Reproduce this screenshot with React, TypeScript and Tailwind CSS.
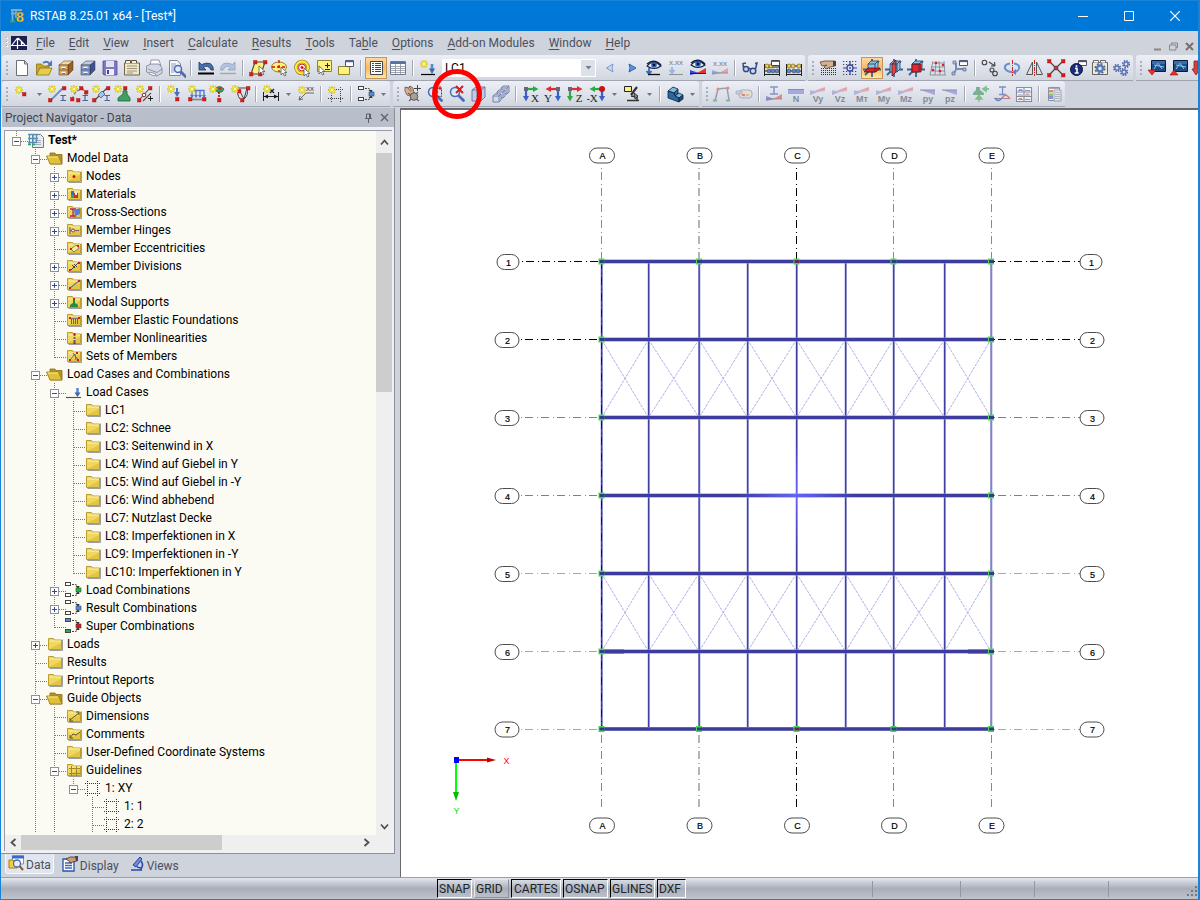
import { useState, type ReactNode } from "react";

/* ---------- small drawing parts shared by the icons ---------- */

const Star = ({ x = 5, y = 5 }: { x?: number; y?: number }) => (
  <g transform={`translate(${x} ${y})`}>
    <path d="M0-4V4M-4 0H4M-3-3L3 3M3-3L-3 3" stroke="#c4b820" strokeWidth="1.4" />
    <path d="M0-3.500V3.500M-3.500 0H3.500M-2.500-2.500L2.500 2.500M2.500-2.500L-2.500 2.500" stroke="#ffee30" strokeWidth="1" />
    <circle r="1.3" fill="#fffbb0" />
  </g>
);

const Dot = ({ x, y, c = "#e01818" }: { x: number; y: number; c?: string }) => (
  <rect x={x - 1.5} y={y - 1.5} width="3.500" height="3.500" fill={c} stroke="#a01818" strokeWidth=".4" />
);

const Beam = ({ x, y }: { x: number; y: number }) => (
  <path d={`M${x - 2.5} ${y - 2.5}h5.500M${x} ${y - 2.5}v5M${x - 2.5} ${y + 2.5}h5.500`} stroke="#4c64a8" strokeWidth="1.2" fill="none" />
);

const Cursor = ({ x, y }: { x: number; y: number }) => (
  <path transform={`translate(${x} ${y})`} d="M0 0v8l2-2 1.5 3 1.5-.8-1.5-2.7H6z" fill="#fff" stroke="#555" strokeWidth=".8" />
);

const Eye = ({ x = 10, y = 6 }: { x?: number; y?: number }) => (
  <g transform={`translate(${x} ${y})`}>
    <path d="M-7 1Q-1-6 7 1Q0 6-7 1z" fill="#e8eef8" stroke="#15203c" strokeWidth="1.1" />
    <path d="M-7-1Q0-7 7 0" fill="none" stroke="#15203c" strokeWidth="1.4" />
    <circle r="2.8" fill="#2c64c4" />
    <circle r="1.3" fill="#061030" />
  </g>
);

const Lens = ({ x, y, r = 4.5 }: { x: number; y: number; r?: number }) => (
  <g>
    <path d={`M${x + r - 1} ${y + r - 1}l5 5`} stroke="#5068b4" strokeWidth="2.800" strokeLinecap="round" />
    <circle cx={x} cy={y} r={r} fill="#dceafc" stroke="#4c6cb8" strokeWidth="1.500" />
  </g>
);

const Cabinet = ({ front, top, side }: { front: string; top: string; side: string }) => (
  <g stroke="#403020" strokeWidth=".5">
    <path d="M3 7l5-4h9l-4 4z" fill={top} />
    <path d="M12 7l5-4v9l-5 5z" fill={side} />
    <path d="M3 7h9v10H3z" fill={front} />
    <path d="M3 12h9" />
    <path d="M5.500 9.500h4M5.500 14.500h4" stroke="#fff" strokeWidth="1.300" />
    <path d="M6 10.500h3M6 15.500h3" stroke="#333" />
  </g>
);

const Cube = ({ planes }: { planes: ReactNode }) => (
  <g>
    <path d="M1 11.500h18M10 1v18M3 17L17 3" stroke="#3c6490" strokeWidth="1.800" />
    <path d="M6 6l3-3h7v8l-3 3H6z" fill="#8cc4e8" stroke="#1c4468" strokeWidth=".8" />
    {planes}
    <path d="M6 6h7v8M13 6l3-3" fill="none" stroke="#1c3450" strokeWidth=".8" />
  </g>
);

const Wedge = ({ label }: { label: string }) => (
  <g>
    <path d="M2 8.500L17 3v4L9 8z" fill="#e8a0a4" />
    <path d="M2 6.500l9 1L2 11z" fill="#a8acdc" />
    <path d="M2 8.500L17 6" stroke="#c0c4d0" strokeWidth=".8" />
    <text x="10" y="18" textAnchor="middle" fontSize="9" fontWeight="bold" fill="#868b94" fontFamily="Liberation Sans, sans-serif">
      {label}
    </text>
  </g>
);

const Slope = ({ label }: { label: string }) => (
  <g>
    <path d="M2 6h15v5z" fill="#a4a8dc" />
    <path d="M2 6h15" stroke="#8a90a0" />
    <text x="10" y="18" textAnchor="middle" fontSize="9" fontWeight="bold" fill="#868b94" fontFamily="Liberation Sans, sans-serif">
      {label}
    </text>
  </g>
);

const Axes = ({ label, h, v, flip, dot }: { label: string; h: string; v: string; flip?: boolean; dot?: boolean }) => (
  <g>
    <g transform={flip ? "translate(20 0) scale(-1 1)" : undefined}>
      <path d="M4 5h10" stroke={h} strokeWidth="2.2" />
      <path d="M12 2l5.500 3-5.500 3z" fill={h} />
      <path d="M5 5v9" stroke={v} strokeWidth="2.2" />
      <path d="M2 12l3 5.500 3-5.500z" fill={v} />
      {dot ? <circle cx="5" cy="5" r="3" fill="#d01010" /> : <path d="M3 3h4v4H3z" fill="#667" />}
    </g>
    <text x={flip ? 5 : 14} y="18" textAnchor="middle" fontSize="11" fill="#222" fontFamily="Liberation Serif, serif">
      {label}
    </text>
  </g>
);

const Combo = ({ a, b, c }: { a: string; b: string; c: string }) => (
  <g stroke="#444" strokeWidth="1">
    <path d="M8 3.500h3q2 0 3 2.500M8 14.500h3q2 0 3-2.500" fill="none" strokeDasharray="2 1" />
    <path d="M11.500 5h4L14.500 8zM11.500 13h4l-1-3z" fill="#333" stroke="none" />
    <rect x="1.500" y="1.500" width="5" height="3" fill={a} />
    <rect x="1.500" y="12.500" width="5" height="3" fill={b} />
    <rect x="12" y="7" width="5" height="4" fill={c} strokeWidth=".6" />
  </g>
);

const Monitor = () => (
  <g>
    <path d="M5.500 2.500h14v11h-14z" fill="#1c4c88" stroke="#0a1a38" />
    <path d="M8 11l4-6 4 6M8 7l10 2" stroke="#8cccf0" fill="none" />
    <path d="M6 3h13v3H6z" fill="#4c84c0" opacity=".6" />
  </g>
);

/* ---------- toolbar icons, drawn on a 20 x 20 field ---------- */

const icons: Record<string, ReactNode> = {
  new: <path d="M4.500 2.500h8L15.500 6v11.500h-11zM12.500 2.500V6h3" fill="#fff" stroke="#6b7078" />,
  open: (
    <g>
      <path d="M2.500 17V6h5l1.500 2h6v3" fill="#c8a428" stroke="#8c7414" strokeWidth=".8" />
      <path d="M2.500 17L6 10h12l-3 7z" fill="#e8cc50" stroke="#8c7414" strokeWidth=".8" />
      <path d="M9 5q4-3 7 1" stroke="#4878b8" strokeWidth="1.800" fill="none" />
      <path d="M18 2v6h-5z" fill="#4878b8" />
    </g>
  ),
  archive: <Cabinet front="#e0a458" top="#f8d898" side="#9c6020" />,
  archiveBlue: <Cabinet front="#7c9cdc" top="#b8ccf4" side="#38549c" />,
  save: (
    <g>
      <path d="M3 3h14v14H4l-1-1z" fill="#8478c4" stroke="#544c94" strokeWidth=".8" />
      <path d="M6 3h8v6H6z" fill="#dfe3f2" />
      <path d="M6 11h8v6H6z" fill="#eef" />
      <path d="M7 12h2v4H7z" fill="#4a4488" />
    </g>
  ),
  printout: (
    <g>
      <path d="M2.500 5h15v12h-15z" fill="#f0e6c8" stroke="#6c6450" />
      <path d="M3.500 5V2.500h5V5M9.500 5V2.500h5V5" fill="#f6efd8" stroke="#5c5440" />
      <path d="M5 8h10M5 10.500h10M5 13h10M5 15h6" stroke="#8a8068" strokeWidth=".8" />
    </g>
  ),
  print: (
    <g stroke="#7c8294" strokeWidth=".8">
      <path d="M6 8l1-6h8l2 6z" fill="#fff" />
      <path d="M2.500 8L7 6h8l3 4v5l-5 3-10.500-4z" fill="#d4d8e8" />
      <path d="M4 11l9 3.500 5-3.500" fill="none" />
      <path d="M6 14l6 2-1 2-6-2z" fill="#fff" />
    </g>
  ),
  preview: (
    <g>
      <path d="M3.500 2.500h8L14.500 6v11.500h-11z" fill="#f4f6fa" stroke="#808690" />
      <path d="M5 6h5M5 8h6M5 10h3M5 12h3M5 14h3" stroke="#9aa0ac" />
      <Lens x={12} y={11} r={3.5} />
    </g>
  ),
  undo: (
    <g>
      <path d="M3 4v8h7L7.500 9.500Q12 6 15 12h2.500Q17 2 5.500 6.500z" fill="#4870a8" stroke="#1c3868" strokeWidth=".8" />
      <path d="M2 15.500h16" stroke="#000" strokeWidth="2" />
    </g>
  ),
  redo: (
    <g>
      <path d="M17 4v8h-7l2.500-2.500Q8 6 5 12H2.500Q3 2 14.500 6.500z" fill="#b4c4e0" stroke="#8ca0c4" strokeWidth=".8" />
      <path d="M2 15.500h16" stroke="#a4a8b0" strokeWidth="1.500" />
    </g>
  ),
  editPoly: (
    <g>
      <path d="M3 16L7 4h10l-4 12z" fill="#fff27c" stroke="#444" strokeWidth="1.100" />
      <Dot x={3} y={16} /><Dot x={7} y={4} /><Dot x={17} y={4} /><Dot x={12} y={16} />
      <Cursor x={11} y={8} />
    </g>
  ),
  editEllipse: (
    <g>
      <ellipse cx="9" cy="9" rx="7.500" ry="5" fill="#fff27c" stroke="#8c8430" strokeWidth="1" />
      <path d="M9 2v12M2 9h14" stroke="#d01010" strokeDasharray="3 2" strokeWidth="1.300" />
      <Cursor x={11} y={9} />
    </g>
  ),
  editRing: (
    <g>
      <circle cx="10" cy="9.500" r="6" fill="#fff" stroke="#7c7014" strokeWidth="3.500" />
      <circle cx="10" cy="9.500" r="6" fill="none" stroke="#ffe838" strokeWidth="2.400" />
      <circle cx="10" cy="9.500" r="3.500" fill="none" stroke="#d01818" strokeWidth="1" />
      <path d="M10 8v3M8.500 9.500h3" stroke="#d01010" strokeWidth="1.300" />
      <Cursor x={12} y={10} />
    </g>
  ),
  note: (
    <g>
      <path d="M3.500 2.500h14v11h-14z" fill="#fff27c" stroke="#8c8430" />
      <path d="M11 7.500h5M13.500 5v5M11 11.500h5" stroke="#222" />
      <Cursor x={5} y={8} />
    </g>
  ),
  windows: (
    <g>
      <path d="M2.500 8.500h11v8h-11z" fill="#fff27c" stroke="#8c8430" />
      <path d="M9.500 2.500h8v6h-8z" fill="#fff" stroke="#556" />
      <path d="M10 3.500h7" stroke="#4468b0" strokeWidth="1.500" />
    </g>
  ),
  navigator: (
    <g>
      <path d="M4.500 3.500h12v13h-12z" fill="#fff" stroke="#444" />
      <path d="M6 5.500h2M6 7.500h2M6 9.500h2M6 11.500h2M6 13.500h2" stroke="#2c50a0" />
      <path d="M9 5.500h6M9 7.500h6M9 9.500h6M9 11.500h6M9 13.500h6" stroke="#444" />
    </g>
  ),
  table: (
    <g>
      <path d="M2.500 3.500h15v13h-15z" fill="#fff" stroke="#70788c" />
      <path d="M3 5h14" stroke="#5870a8" strokeWidth="2" />
      <path d="M3 8.500h14M3 10.500h14M3 12.500h14M3 14.500h14M7.500 6v10M12.500 6v10" stroke="#8890a0" strokeWidth=".8" />
    </g>
  ),
  newLoad: (
    <g>
      <Star x={6} y={6} />
      <path d="M14 6v5" stroke="#5c88cc" strokeWidth="2.600" />
      <path d="M11 10.500h6L14 16z" fill="#3c68b4" />
      <path d="M3 16.500h14" stroke="#000" strokeWidth="1.200" />
    </g>
  ),
  prev: <path d="M13 6L6.500 10l6.500 4-1-4z" fill="#c8dcf4" stroke="#7898cc" />,
  next: <path d="M7 6l7 4-7 4 1-4z" fill="#5c94e4" stroke="#3460b4" />,
  showLoads: (
    <g>
      <Eye x={10} y={7} />
      <path d="M5 10v6M2.500 13L5 16l2.500-3" stroke="#3868bc" strokeWidth="1.800" fill="none" />
      <path d="M4 16.500h12" stroke="#111" strokeWidth="1.300" />
    </g>
  ),
  loadValues: (
    <g>
      <text x="10" y="7" textAnchor="middle" fontSize="8" fill="#777d88" fontFamily="Liberation Sans, sans-serif">x.xx</text>
      <path d="M6 9v6M3.500 12L6 15l2.500-3" stroke="#9cb4dc" strokeWidth="1.800" fill="none" />
      <path d="M3 16.500h14" stroke="#8a9098" />
    </g>
  ),
  showResults: (
    <g>
      <path d="M9 15l9-5v5z" fill="#e83030" />
      <path d="M2 12v5l9-2z" fill="#3848d0" />
      <path d="M2 15.500h16" stroke="#222" strokeWidth="1" />
      <Eye x={10} y={6} />
    </g>
  ),
  resultValues: (
    <g>
      <text x="10" y="8" textAnchor="middle" fontSize="8" fill="#777d88" fontFamily="Liberation Sans, sans-serif">x.xx</text>
      <path d="M9 15l9-5v5z" fill="#eaa0a4" />
      <path d="M2 12v5l9-2z" fill="#a0a8e0" />
      <path d="M2 15h16" stroke="#8a9098" />
    </g>
  ),
  glasses: (
    <g fill="#c4d8f4" stroke="#384c80" strokeWidth="1.500">
      <circle cx="6" cy="11" r="2.600" />
      <circle cx="13" cy="13" r="2.800" />
      <path d="M8 10l3 1M3.500 10L3 5.500l3-.5M15.500 11L17 5l-2 .5" fill="none" />
    </g>
  ),
  abacus: (
    <g>
      <path d="M2.500 6v12M17.500 6v12M2 9h16M2 13h16M2 16.500h16" stroke="#222" strokeWidth="1" />
      <g stroke="#443c10" strokeWidth=".5">
        <circle cx="5" cy="8" r="2" fill="#f0d040" /><circle cx="9" cy="8" r="2" fill="#f0d040" />
        <circle cx="7" cy="13" r="2" fill="#5c84dc" /><circle cx="11" cy="13" r="2" fill="#5c84dc" /><circle cx="15" cy="13" r="2" fill="#5c84dc" />
      </g>
      <path d="M9.500 2.500h8v5h-8z" fill="#fff" stroke="#444" />
      <path d="M10 3.500h7" stroke="#667" />
    </g>
  ),
  abacus2: (
    <g>
      <path d="M2.500 6v12M17.500 6v12M2 8h16M2 13h16M2 16.500h16" stroke="#222" strokeWidth="1" />
      <g stroke="#443c10" strokeWidth=".5">
        <circle cx="5" cy="8" r="2" fill="#f0d040" /><circle cx="9" cy="8" r="2" fill="#f0d040" /><circle cx="15" cy="8" r="2" fill="#f0d040" />
        <circle cx="5" cy="13" r="2" fill="#5c84dc" /><circle cx="10" cy="13" r="2" fill="#5c84dc" /><circle cx="14" cy="13" r="2" fill="#5c84dc" />
      </g>
    </g>
  ),
  gridHand: (
    <g>
      <path d="M3 10.500h15M3 12.500h15M3 14.500h15M3 16.500h15" stroke="#333" strokeDasharray="1 1" />
      <path d="M2 4l5-1h10v5l-5 1-4 2-2-2 3-2-5 1z" fill="#d8b090" stroke="#5c4430" strokeWidth=".8" />
      <path d="M15 3h3v5h-3z" fill="#444" />
    </g>
  ),
  snap: (
    <g>
      <path d="M3 3.500h15M3 6.500h15M3 13.500h15M3 16.500h15" stroke="#444" strokeWidth="1.200" strokeDasharray="1.200 1.800" />
      <path d="M10 3v14M3 10h14" stroke="#3040a8" strokeWidth="1.200" />
      <circle cx="10" cy="10" r="3" fill="#e8ecf8" stroke="#3040a8" strokeWidth="1.300" />
      <circle cx="10" cy="10" r="1" fill="#3040a8" />
    </g>
  ),
  planeXY: <Cube planes={<path d="M2 14l4-4h12l-4 4z" fill="#e02020" stroke="#600" strokeWidth=".7" />} />,
  planeYZ: <Cube planes={<path d="M8 6l4-4v12l-4 4z" fill="#e04848" stroke="#600" strokeWidth=".7" />} />,
  planeXZ: <Cube planes={<path d="M6 6h9v8H6z" fill="#e82828" stroke="#600" strokeWidth=".7" />} />,
  mesh: (
    <g fill="none" stroke="#788494" strokeWidth=".8">
      <path d="M2 17L5 3M7 17l1-14M12 17l-1-14M17 17l-1-14M4 5h12M3 9h14M3 13h14M2 17h16" />
      <g stroke="none" fill="#e02020"><circle cx="8" cy="5" r="1.300" /><circle cx="15" cy="7" r="1.300" /><circle cx="5" cy="12" r="1.300" /><circle cx="12" cy="13" r="1.300" /></g>
    </g>
  ),
  coordWindow: (
    <g>
      <path d="M6 5v7M6 12l-3 4M6 11h8" stroke="#7c8cb0" strokeWidth="2" />
      <path d="M3 3h3v3H3zM2 14h3v3H2zM13 10h3v3h-3z" fill="#a8b8dc" stroke="#5c6c98" strokeWidth=".7" />
      <path d="M9.500 2.500h8v5h-8z" fill="#fff" stroke="#556" />
      <path d="M10 3.500h7" stroke="#4468b0" strokeWidth="1.300" />
    </g>
  ),
  moveCopy: (
    <g fill="none" stroke="#444" strokeWidth="1.100">
      <circle cx="4.500" cy="4.500" r="2.300" /><path d="M9 4l6 4M15 8l-.5-4M15 8h-4" /><circle cx="12" cy="12" r="2" /><circle cx="15" cy="15.500" r="2.300" />
    </g>
  ),
  rotate: (
    <g fill="none">
      <path d="M8 5.500Q2 6.500 3 10.500q2 3.500 7 3.500M12 5.500q6 1 5 5-1 3-4 3.500" stroke="#6890cc" strokeWidth="2" />
      <path d="M14 11l-4 3 4 3z" fill="#5884c8" />
      <path d="M10.500 2v16" stroke="#d02020" strokeWidth="1" strokeDasharray="4 1 1 1" />
    </g>
  ),
  mirror: (
    <g fill="none" stroke="#555">
      <path d="M8.500 4v12.500h-6zM12.500 4v12.500h6z" />
      <path d="M10.500 2v16" stroke="#d02020" strokeDasharray="4 1 1 1" />
    </g>
  ),
  intersect: (
    <g>
      <path d="M4 4l12 12M16 4L4 16" stroke="#444" strokeWidth="1.200" />
      <Dot x={3} y={3} /><Dot x={17} y={3} /><Dot x={3} y={17} /><Dot x={17} y={17} />
      <circle cx="10" cy="10" r="2" fill="#e03030" stroke="#333" strokeWidth=".6" />
    </g>
  ),
  info: (
    <g>
      <path d="M10.500 2.500h8v5h-8z" fill="#fff" stroke="#556" /><path d="M11 3.500h7" stroke="#556" strokeWidth="1.300" />
      <circle cx="8.500" cy="11.500" r="6" fill="#1c2c78" stroke="#0a1440" />
      <path d="M8.500 7.200v2M7 10.500h2v4M6.700 15h4" stroke="#fff" strokeWidth="1.600" fill="none" />
    </g>
  ),
  settings: (
    <g>
      <path d="M2.500 4.500h15v12h-15z" fill="#f0ead8" stroke="#666" /><path d="M3.500 4.500v-2h5v2M10.500 4.500v-2h5v2" fill="#fff" stroke="#666" />
      <circle cx="10" cy="10.500" r="4.800" fill="none" stroke="#4c6498" strokeWidth="1.500" strokeDasharray="2 1.770" />
      <circle cx="10" cy="10.500" r="3" fill="#dce6f8" stroke="#5878b8" strokeWidth="2.400" />
    </g>
  ),
  gears: (
    <g fill="#d0dcf4" stroke="#5068a8">
      {[[5, 10], [14, 6], [12, 14]].map(([x, y]) => (
        <g key={x}>
          <circle cx={x} cy={y} r="3.300" fill="none" strokeWidth="1.600" strokeDasharray="1.400 1.190" />
          <circle cx={x} cy={y} r="2.100" strokeWidth="1.200" />
        </g>
      ))}
    </g>
  ),
  screenDown: <g><Monitor /><path d="M2 12h8l-4 5z" fill="#e83028" stroke="#901010" strokeWidth=".6" /></g>,
  screenUp: <g><Monitor /><path d="M2 17h8l-4-5z" fill="#e83028" stroke="#901010" strokeWidth=".6" /></g>,
  redDown: <path d="M4 3h4v8h2l-4 6-4-6h2z" fill="#d84038" stroke="#902020" strokeWidth=".8" />,

  node: <g><Star x={7} y={6} /><Dot x={12} y={10} /></g>,
  member: <g><path d="M4 16L16 4" stroke="#6890c8" strokeWidth="1.800" /><Dot x={3} y={16} /><Dot x={17} y={4} /><Beam x={16} y={14} /><Star /></g>,
  polyline: <g><path d="M3 15l4-8 7-2 3 6" stroke="#788" strokeWidth="1.300" fill="none" strokeDasharray="3 2" /><Dot x={3} y={15} /><Dot x={12} y={4} /><Dot x={17} y={8} /><Dot x={9} y={16} /><Beam x={16} y={14} /><Star /></g>,
  memberSet: <g><path d="M4 16L16 4" stroke="#444" strokeWidth="1.100" /><path d="M7 11l4-4 3 3-4 4z" fill="#9cc4ec" stroke="#557" strokeWidth=".8" /><Dot x={3} y={16} /><Dot x={17} y={4} /><Beam x={16} y={14} /><Star /></g>,
  support: <g><Dot x={12} y={4} /><path d="M10 7q2-1 4 0v3l3 4v3H5v-3l5-4z" fill="#40a064" stroke="#1c6434" strokeWidth=".8" /><Star /></g>,
  hinge: <g><path d="M4 16L15 4M8 17l8-8" stroke="#555" strokeWidth="1.100" /><circle cx="9" cy="11" r="1.800" fill="#fff" stroke="#a02020" /><Dot x={15} y={4} /><Dot x={4} y={16} /><path d="M13 14.500h5M15.500 12v5" stroke="#222" /><Star /></g>,
  nodalLoad: <g><path d="M12 4v5" stroke="#5078c4" strokeWidth="2" /><path d="M9 8h6l-3 5z" fill="#4870c0" /><Dot x={12} y={15} /><Star x={6} y={5} /></g>,
  memberLoad: <g><path d="M5 6.500h12v5M9 7v5M13 7v5M5 7v5" stroke="#5078c4" strokeWidth="1.300" fill="none" /><path d="M3 11h4l-2 3zM7 11h4l-2 3zM11 11h4l-2 3zM15 11h4l-2 3z" fill="#5078c4" /><path d="M4 15.500h13" stroke="#889" strokeWidth="1.800" /><Dot x={3} y={15} /><Dot x={17} y={15} /><Star /></g>,
  imposed: <g><Dot x={10} y={16} /><path d="M10 8v8" stroke="#c02020" strokeWidth="1.800" strokeDasharray="2 1" /><path d="M6 5q4.500-5 9 0l-2 3H8z" fill="#40a064" stroke="#1c6434" strokeWidth=".8" /><circle cx="11" cy="4.500" r="1.500" fill="#e02020" /><Star x={4} y={5} /></g>,
  generated: <g><path d="M7 4h9l-3 11zM9 15Q5 10 8 5M13 15q5-4 3-11" stroke="#444" strokeWidth="1" fill="none" /><Dot x={17} y={4} /><Dot x={11} y={16} /><Dot x={8} y={7} /><Star x={4} y={5} /></g>,
  dimension: <g><path d="M2.500 8v9M17.500 8v9M3 12.500h14" stroke="#222" /><path d="M3 12.500l4-2v4zM17 12.500l-4-2v4z" fill="#111" /><path d="M9 5l4 4M13 5l-4 4" stroke="#222" strokeWidth="1.300" /><Star x={6} y={5} /></g>,
  comment: <g><path d="M3 16l7-7h8M3 16l1-4M3 16l4-1" stroke="#666" fill="none" /><text x="10" y="7" fontSize="8" fill="#444" fontFamily="Liberation Sans, sans-serif">xx</text><Star x={6} y={6} /></g>,
  guideline: <g><path d="M5.500 3v15M14.500 3v15M2 5.500h16M2 14.500h16" stroke="#444" strokeDasharray="1 1" fill="none" /><Star x={6} y={6} /></g>,
  combination: <g transform="translate(1 1)"><Combo a="#fff" b="#fff" c="#4c8ce0" /></g>,

  pan: <g><path d="M2 3l4 1 1-2 3 2 1 5-3 3-4-1-2-4z" fill="#d8b094" stroke="#6c5040" strokeWidth=".8" /><path d="M4 3l4 5M6 2l3 5" stroke="#6c5040" strokeWidth=".6" /><path d="M5 9l11 8M15 8l-9 9" stroke="#666" strokeWidth="1.300" /><circle cx="11" cy="12.500" r="3.800" fill="#a8a094" stroke="#555" /><path d="M11 4.500h7M14.500 1v6" stroke="#444" /></g>,
  zoomWindow: <g><Lens x={8} y={8} /><path d="M8.500 4.500h8v8h-8z" fill="none" stroke="#444" strokeDasharray="2 1" /><path d="M15 2v4M13 4h4" stroke="#d02020" strokeWidth="1.200" /></g>,
  zoomAll: <g><Lens x={8} y={8} /><path d="M9 2l7 7M16 2L9 9" stroke="#d02020" strokeWidth="2" /></g>,
  viewBox: <g><path d="M3 6l4-3h9v10l-4 4H3z" fill="#c0cae4" stroke="#65709c" strokeWidth=".9" /><path d="M3 6h9v11M12 6l4-3M8 4v9" fill="none" stroke="#65709c" strokeWidth=".9" /></g>,
  multiCube: <g fill="#d4daec" stroke="#6c78a4" strokeWidth=".9"><path d="M10 4l2-2h6v6l-2 2h-6zM10 4h6v6M16 4l2-2" /><path d="M6 8l2-2h6v6l-2 2H6zM6 8h6v6M12 8l2-2" /><path d="M2 12l2-2h6v6l-2 2H2zM2 12h6v6M8 12l2-2" /></g>,
  viewX: <Axes label="X" h="#30a848" v="#3860c8" />,
  viewY: <Axes label="Y" h="#d83038" v="#3860c8" flip />,
  viewZ: <Axes label="Z" h="#d83038" v="#30a848" />,
  viewNegX: <Axes label="-X" h="#30a848" v="#3860c8" flip dot />,
  render: <g><path d="M2.500 2.500h7v5h-7z" fill="#fff27c" stroke="#222" /><path d="M15 3l-6 8" stroke="#333" strokeWidth="2.200" /><path d="M5 16.500h12M9 12l6 1v3" stroke="#333" strokeWidth="1.500" fill="none" /><path d="M12 9l4 3-3 3z" fill="#889" stroke="#222" strokeWidth=".8" /></g>,
  solid: <g stroke="#08243c" strokeWidth=".8"><path d="M3 7l5-4 5 2-4 4z" fill="#7cb8e0" /><path d="M9 9l4-4v4l-3 3z" fill="#2c689c" /><path d="M10 12l4-3 4 2-4 3z" fill="#7cb8e0" /><path d="M3 7l6 2 1 3 4 2v4L3 14z" fill="#2c689c" /><path d="M14 14l4-3v4l-4 3z" fill="#1c4c7c" /></g>,
  frame: <g opacity=".55" fill="none"><path d="M3 17L6 5l9-1 2 12" stroke="#667" strokeWidth="1.500" /><circle cx="6" cy="5" r="1.600" fill="#e04040" /><circle cx="16" cy="4" r="1.600" fill="#e04040" /><path d="M1 16.500h4M14 16.500h4" stroke="#30a050" strokeWidth="2" /></g>,
  cutter: <g opacity=".6"><rect x="5" y="6" width="13" height="8" rx="3" fill="#d8dade" stroke="#889" /><path d="M2 7h6v3H2z" fill="#bbc" stroke="#889" strokeWidth=".7" /><path d="M8 10h3v2H8z" fill="#e04040" /><path d="M12 10h3v2h-3z" fill="#d8b820" /></g>,
  sectionForces: <g opacity=".6"><path d="M6 3h8M10 3v7M6 10h8" stroke="#4860a8" strokeWidth="1.500" /><path d="M9 15l9-5v5z" fill="#e85050" /><path d="M2 12v5l9-2z" fill="#5860d0" /><path d="M2 15h16" stroke="#555" strokeWidth=".8" /></g>,
  forceN: (
    <g>
      <path d="M2 6h16v4H2z" fill="#a4a8dc" /><path d="M2 5.500h16" stroke="#8a90a0" />
      <text x="10" y="18" textAnchor="middle" fontSize="9" fontWeight="bold" fill="#868b94" fontFamily="Liberation Sans, sans-serif">N</text>
    </g>
  ),
  forceVy: <Wedge label="Vy" />,
  forceVz: <Wedge label="Vz" />,
  momentT: <Wedge label="Mт" />,
  momentY: <Wedge label="My" />,
  momentZ: <Wedge label="Mz" />,
  contactY: <Slope label="py" />,
  contactZ: <Slope label="pz" />,
  reactions: <g opacity=".55"><path d="M6 3h4v3l4 3v2H3V9l3-3z" fill="#2c8450" /><path d="M19 5h-5M16 3l-3 2 3 2z" stroke="#30a840" strokeWidth="1.800" fill="#30a840" /><path d="M9 18v-4M6 15l3-4 3 4z" stroke="#30a840" strokeWidth="1.300" fill="#30a840" /></g>,
  stressBeam: <g opacity=".65" fill="none"><path d="M7 3h7M10.500 3v7M7 10.500h7" stroke="#4860a8" strokeWidth="1.300" /><path d="M2 14.500h16" stroke="#666" /><path d="M3 14q3 5 7 0" stroke="#3850d0" strokeWidth="1.500" /><path d="M10 14q4-6 8 1" stroke="#e04040" strokeWidth="1.500" /></g>,
  resultGrid: <g opacity=".6"><path d="M2.500 3.500h15v14h-15zM10 3v14M3 8h15M3 12.500h15" fill="#fff" stroke="#556" strokeWidth="1.100" /><path d="M4 6.500h5M11 6.500h5M4 11h5M11 11h5M4 15.500h5M11 15.500h5" stroke="#5068c0" /><path d="M5 5.500h3M12 10h3M5 14.500h3" stroke="#e05050" /></g>,
  panel: <g opacity=".65"><path d="M4.500 3.500h11v13h-11z" fill="#fff" stroke="#667" /><path d="M5 4.500h10" stroke="#889" /><path d="M5 6h4v2H5z" fill="#e05050" /><path d="M5 8h4v2H5z" fill="#e0c840" /><path d="M5 10h4v2H5z" fill="#50b860" /><path d="M5 12h4v3H5z" fill="#5070d0" /><path d="M10 6h7v11h-7z" fill="#e8eaf0" stroke="#667" strokeWidth=".8" /><path d="M11 8.500h5M11 10.500h5M11 12.500h5M11 14.500h5" stroke="#889" strokeWidth=".8" /></g>,
};

const toolbars: { row: number; items: string[] }[] = [
  {
    row: 1,
    items: "new open archive archiveBlue save printout print preview | undo redo | editPoly editEllipse editRing note windows | navigator* table | newLoad select prev next showLoads loadValues showResults resultValues | glasses abacus abacus2".split(" "),
  },
  {
    row: 1,
    items: "gridHand snap planeXY* planeYZ planeXZ mesh coordWindow | moveCopy rotate mirror intersect info settings gears".split(" "),
  },
  { row: 1, items: "screenDown screenUp redDown".split(" ") },
  {
    row: 2,
    items: "node v member polyline memberSet support hinge | nodalLoad memberLoad imposed generated | dimension v comment | guideline | combination v".split(" "),
  },
  {
    row: 2,
    items: "pan zoomWindow zoomAll! viewBox multiCube | viewX viewY viewZ viewNegX v render v | solid v".split(" "),
  },
  {
    row: 2,
    items: "frame cutter | sectionForces forceN forceVy forceVz momentT momentY momentZ contactY contactZ | reactions stressBeam resultGrid | panel".split(" "),
  },
];

function LoadCaseSelect() {
  return (
    <div className="relative mx-[3px] h-[18px] w-[154px] shrink-0 border border-white bg-white">
      <select
        aria-label="Load case"
        className="block h-full w-full appearance-none bg-transparent pl-0.5 text-xs leading-4 text-black outline-none"
      >
        <option>LC1</option>
      </select>
      <span className="pointer-events-none absolute inset-y-0 right-0 flex w-3.5 items-center justify-center bg-[#dde1e9]">
        <svg width="7" height="4" viewBox="0 0 7 4"><path d="M0.500 0h6l-3 3.500z" fill="#777c86" /></svg>
      </span>
    </div>
  );
}

function ToolItem({ item }: { item: string }) {
  if (item === "|") return <span className="mx-[3px] h-4 w-0.5 shrink-0 border-l border-[#a3a8b3] bg-white" />;
  if (item === "select") return <LoadCaseSelect />;
  if (item === "v") {
    return (
      <button aria-label="More" className="flex h-[22px] w-[13px] shrink-0 items-center justify-center">
        <svg width="5" height="3" viewBox="0 0 5 3"><path d="M0 0h5L2.500 3z" fill="#70757f" /></svg>
      </button>
    );
  }
  const name = item.replace(/[*!]/, "");
  const active = item.endsWith("*");
  return (
    <button
      aria-label={name}
      className={`relative flex h-[22px] w-[22px] shrink-0 items-center justify-center ${
        active ? "border border-[#c2955c] bg-linear-to-b from-[#fbd9a2] via-[#fdb85f] to-[#ffe8a0]" : ""
      }`}
    >
      <svg width="20" height="20" viewBox="0 0 20 20" className="shrink-0">{icons[name]}</svg>
      {item.endsWith("!") && (
        <svg width="50" height="50" viewBox="0 0 50 50" className="pointer-events-none absolute -left-3.5 -top-3.5 z-10 max-w-none">
          <circle cx="25" cy="25" r="22.500" fill="none" stroke="#ff0000" strokeWidth="5" />
        </svg>
      )}
    </button>
  );
}

function ToolbarRow({ row, clip }: { row: number; clip?: boolean }) {
  return (
    <div className={`flex h-[26px] gap-[3px] pl-px ${clip ? "overflow-hidden" : ""}`}>
      {toolbars.filter((t) => t.row === row).map((bar, i) => (
        <div
          key={i}
          role="toolbar"
          className="flex h-[26px] shrink-0 items-center rounded-t-[3px] border-b border-[#9fa4b0] bg-linear-to-b from-[#eceff6] to-[#d2d6df] pt-px"
        >
          <svg width="9" height="18" viewBox="0 0 9 18" className="shrink-0">
            <path d="M4 2h2v2H4zM4 6h2v2H4zM4 10h2v2H4zM4 14h2v2H4z" fill="#a9aebb" />
          </svg>
          {bar.items.map((item, j) => <ToolItem key={j} item={item} />)}
        </div>
      ))}
    </div>
  );
}

/* ---------- project navigator ---------- */

type TreeNode = {
  label: string;
  icon: string;
  box?: "+" | "-";
  more?: boolean;
  children?: TreeNode[];
};

const leaf = (label: string, icon = "folder", box?: "+"): TreeNode => ({ label, icon, box });

const tree: TreeNode = {
  label: "Test*",
  icon: "model",
  box: "-",
  children: [
    {
      label: "Model Data",
      icon: "openFolder",
      box: "-",
      children: [
        leaf("Nodes", "nodes", "+"),
        leaf("Materials", "materials", "+"),
        leaf("Cross-Sections", "sections", "+"),
        leaf("Member Hinges", "hinges", "+"),
        leaf("Member Eccentricities", "eccentric"),
        leaf("Member Divisions", "divisions", "+"),
        leaf("Members", "members", "+"),
        leaf("Nodal Supports", "supports", "+"),
        leaf("Member Elastic Foundations", "elastic"),
        leaf("Member Nonlinearities", "nonlinear"),
        leaf("Sets of Members", "sets"),
      ],
    },
    {
      label: "Load Cases and Combinations",
      icon: "openFolder",
      box: "-",
      children: [
        {
          label: "Load Cases",
          icon: "load",
          box: "-",
          children: [
            leaf("LC1"),
            leaf("LC2: Schnee"),
            leaf("LC3: Seitenwind in X"),
            leaf("LC4: Wind auf Giebel in Y"),
            leaf("LC5: Wind auf Giebel in -Y"),
            leaf("LC6: Wind abhebend"),
            leaf("LC7: Nutzlast Decke"),
            leaf("LC8: Imperfektionen in X"),
            leaf("LC9: Imperfektionen in -Y"),
            leaf("LC10: Imperfektionen in Y"),
          ],
        },
        leaf("Load Combinations", "loadCombo", "+"),
        leaf("Result Combinations", "resultCombo", "+"),
        leaf("Super Combinations", "superCombo"),
      ],
    },
    leaf("Loads", "folder", "+"),
    leaf("Results"),
    leaf("Printout Reports"),
    {
      label: "Guide Objects",
      icon: "openFolder",
      box: "-",
      more: true,
      children: [
        leaf("Dimensions", "dimensions"),
        leaf("Comments", "comments"),
        leaf("User-Defined Coordinate Systems"),
        {
          label: "Guidelines",
          icon: "guidelines",
          box: "-",
          more: true,
          children: [
            { label: "1: XY", icon: "guide", box: "-", children: [leaf("1: 1", "guide"), { ...leaf("2: 2", "guide"), more: true }] },
          ],
        },
      ],
    },
  ],
};

const Folder = ({ children }: { children?: ReactNode }) => (
  <g>
    <path d="M4.500 15.500h13v-11" stroke="#77777a" fill="none" opacity=".7" />
    <path d="M3.500 14.500v-11h5l1 1.500h7v9.500z" fill="#f0d860" stroke="#bc9c2c" />
    <path d="M4.500 6h11.500" stroke="#fdf3b0" />
    <path d="M4 14h12V8z" fill="#dcb830" opacity=".6" />
    {children}
  </g>
);

const treeIcons: Record<string, ReactNode> = {
  folder: <Folder />,
  openFolder: (
    <g>
      <path d="M5 15V4h5l1 1.500h6V15z" fill="#b8941c" stroke="#8c6c14" strokeWidth=".8" />
      <path d="M5 15L1.500 7h12L17 15z" fill="#e0c038" stroke="#98781c" strokeWidth=".8" />
      <path d="M3 8h10" stroke="#fbec90" />
    </g>
  ),
  model: (
    <g>
      <path d="M6.500 3.500h8l3 3v10h-11z" fill="#e8eaee" stroke="#778" />
      <path d="M9 9.500h6M9 11.500h6M9 13.500h6" stroke="#aab" />
      <path d="M2 3.500h10M2 7.500h10M2 11.500h9M3.500 3v10M7 3v10M10.500 3v8" stroke="#5890b4" strokeWidth="1.300" />
      <path d="M2 13.500h3M6 13.500h3" stroke="#30a070" strokeWidth="1.600" />
    </g>
  ),
  nodes: <Folder><circle cx="10" cy="9.500" r="1.500" fill="#d01010" /></Folder>,
  materials: <Folder><path d="M7 6h3v7H7z" fill="#3868c8" /><path d="M10 8h4v5h-4z" fill="#c83030" /><path d="M7 10h3v3H7z" fill="#30a848" /><path d="M11 7h2v3h-2z" fill="#eee" /></Folder>,
  sections: <Folder><path d="M6 6h6M9 6v7M6 13h6" stroke="#c02050" strokeWidth="1.300" /><path d="M10 7l6-2v6l-5 2z" fill="#5878e4" /></Folder>,
  hinges: <Folder><path d="M6 6v7M6 9.500h9" stroke="#667" strokeWidth="1.200" /><circle cx="9" cy="9.500" r="1.500" fill="#fff" stroke="#a03020" /></Folder>,
  eccentric: <Folder><path d="M7 10l5-4 3 3-5 4z" fill="#f8f0a0" stroke="#666" strokeWidth=".8" /><path d="M6 9h2v2H6zM13 6h2v2h-2z" fill="#d02020" /></Folder>,
  divisions: <Folder><path d="M6 14l9-9M8 8l3 3M10 7l3 3" stroke="#444" strokeWidth="1" /><path d="M5 12h2v2H5zM14 5h2v2h-2z" fill="#d02020" /></Folder>,
  members: <Folder><path d="M6 13l9-7" stroke="#778" strokeWidth="1.400" /><path d="M5 12h2v2H5zM14 5h2v2h-2z" fill="#d02020" /></Folder>,
  supports: <Folder><path d="M9 7h2v3l3 2v2H6v-2l3-2z" fill="#248a48" /><path d="M9 5h2v2H9z" fill="#d02020" /></Folder>,
  elastic: <Folder><path d="M6 7.500h9" stroke="#778" strokeWidth="1.500" /><path d="M7.500 8v5M9.500 8v5M11.500 8v5M13.500 8v5" stroke="#248a48" /><path d="M5 6h2v2H5zM14 6h2v2h-2z" fill="#d02020" /></Folder>,
  nonlinear: <Folder><path d="M10.500 5v10" stroke="#557" strokeWidth="1.800" strokeDasharray="2 1" /><path d="M9.500 4h2v2h-2zM9.500 13h2v2h-2z" fill="#d02020" /></Folder>,
  sets: <Folder><path d="M6 13l5-6 1 6M9 6l6 8" stroke="#668" strokeWidth="1" fill="none" /><path d="M5 12h2v2H5zM12 5h2v2h-2zM13 12h2v2h-2z" fill="#d02020" /></Folder>,
  dimensions: <Folder><path d="M6 13l9-7M6 11v3h3M12 5h3v3" stroke="#5c5420" strokeWidth="1" fill="none" /></Folder>,
  comments: <Folder><path d="M6 13l3-4 3 1 4-3M6 13v-3M6 13h3" stroke="#5c5420" strokeWidth="1" fill="none" /></Folder>,
  guidelines: <Folder><path d="M7.500 5v10M12.500 5v10M5 7.500h11M5 12.500h11" stroke="#a08828" fill="none" /></Folder>,
  load: <g><path d="M13.500 5v6" stroke="#6488cc" strokeWidth="2.600" /><path d="M10.500 9.500h6l-3 4.500z" fill="#3c64b0" /><path d="M2 14.500h15" stroke="#555" strokeWidth="1.200" /></g>,
  loadCombo: <Combo a="#fff" b="#fff" c="#20b838" />,
  resultCombo: <Combo a="#fff" b="#fff" c="#4c8ce8" />,
  superCombo: <Combo a="#4c8ce8" b="#20b838" c="#d01828" />,
  guide: <path d="M4.500 2v15M14.500 2v15M2 4.500h15M2 14.500h15" stroke="#333" strokeDasharray="1 1" fill="none" />,
};

/** One 19 px column of the tree: dotted connector lines and, if set, the +/- box. */
function Branch({ up, down, right, box }: { up?: boolean; down?: boolean; right?: boolean; box?: string }) {
  return (
    <svg width="19" height="18" viewBox="0 0 19 18" className="shrink-0 overflow-visible" fill="none" shapeRendering="crispEdges">
      <g stroke="#77776f" strokeDasharray="1 1">
        {up && <path d="M9.500 0V11" />}
        {down && <path d="M9.500 10V18" />}
        {right && <path d="M10 10.500H21" />}
      </g>
      {box && (
        <>
          <rect x="5.500" y="6.500" width="8" height="8" fill="#fff" stroke="#919191" />
          <path d={box === "+" ? "M7 10.500h5M9.500 8v5" : "M7 10.500h5"} stroke="#30489c" />
        </>
      )}
    </svg>
  );
}

function TreeItem({ node, guides, last }: { node: TreeNode; guides: boolean[]; last: boolean }) {
  const [open, setOpen] = useState(node.box === "-");
  const goesOn = !last || !!node.more;
  return (
    <li>
      <button onClick={() => setOpen(!open)} className="flex h-[18px] w-full items-center text-left">
        {guides.map((on, i) => <Branch key={i} up={on} down={on} />)}
        <Branch up down={goesOn} right box={node.box} />
        <svg width="19" height="18" viewBox="0 0 19 18" className="shrink-0">{treeIcons[node.icon]}</svg>
        <span className={`whitespace-nowrap pl-[3px] text-xs leading-4 ${guides.length === 0 ? "font-bold" : ""}`}>
          {node.label}
        </span>
      </button>
      {open && node.children && (
        <ul>
          {node.children.map((child, i) => (
            <TreeItem
              key={child.label}
              node={child}
              guides={[...guides, guides.length > 0 && goesOn]}
              last={i === node.children!.length - 1}
            />
          ))}
        </ul>
      )}
    </li>
  );
}

const Chevron = ({ d }: { d: string }) => (
  <svg width="9" height="9" viewBox="0 0 9 9"><path d={d} fill="none" stroke="#505050" strokeWidth="1.800" /></svg>
);

function Navigator() {
  return (
    <aside className="flex w-[394px] shrink-0 flex-col">
      <div className="flex min-h-0 flex-1 flex-col border-b border-r border-[#8b8f98] bg-[#eef1f8] pl-px">
        <div className="flex h-[19px] shrink-0 items-center bg-[#b9bfca] pl-[3px] pr-0.5 text-xs text-[#41454e]">
          <h2 className="flex-1">Project Navigator - Data</h2>
          <button aria-label="Pin" className="flex w-4 justify-center">
            <svg width="9" height="10" viewBox="0 0 9 10"><path d="M2.500 5.500V1h4v4.500M1 5.500h7M4.500 6v4M5.500 1v4" fill="none" stroke="#5b606b" /></svg>
          </button>
          <button aria-label="Close navigator" className="flex w-4 justify-center">
            <svg width="9" height="9" viewBox="0 0 9 9"><path d="M1 1l7 7M8 1L1 8" stroke="#5b606b" strokeWidth="1.300" /></svg>
          </button>
        </div>
        <div className="mb-0.5 ml-0.5 mr-0.5 mt-[3px] flex min-h-0 flex-1 flex-col border-l border-t border-[#9a9da5] bg-[#efefef]">
          <div className="flex min-h-0 flex-1">
            <div className="min-w-0 flex-1 overflow-hidden bg-[#fcfbf3] pl-0.5">
              <ul><TreeItem node={tree} guides={[]} last /></ul>
            </div>
            <div className="flex w-4 flex-col items-center">
              <button aria-label="Scroll up" className="flex h-[22px] items-center"><Chevron d="M1 6.500l3.500-4L8 6.500" /></button>
              <div className="w-full flex-1"><div className="h-[36%] bg-[#cdcdcd]" /></div>
              <button aria-label="Scroll down" className="flex h-[17px] items-center"><Chevron d="M1 2.500l3.500 4L8 2.500" /></button>
            </div>
          </div>
          <div className="flex h-4 items-center pb-px pr-4">
            <button aria-label="Scroll left" className="flex w-4 justify-center"><Chevron d="M6.500 1l-4 3.500 4 3.500" /></button>
            <div className="h-full flex-1"><div className="h-full w-[60%] bg-[#cdcdcd]" /></div>
            <button aria-label="Scroll right" className="flex w-5 justify-center"><Chevron d="M2.500 1l4 3.500-4 3.500" /></button>
          </div>
        </div>
      </div>
      <div role="tablist" className="flex h-[23px] shrink-0 items-start gap-1.5 pl-1 text-xs text-[#4a5060]">
        <button role="tab" aria-selected="true" className="flex h-5 items-end gap-0.5 rounded-b-[3px] border border-t-0 border-[#f4f8ff] bg-[#e1e5ee] px-0.5">
          <svg width="16" height="16" viewBox="0 0 16 16" className="mb-0.5">
            <path d="M4.500 1h11v8h-11z" fill="#fff" stroke="#8090b8" /><path d="M4 2h12" stroke="#3868d0" strokeWidth="3" />
            <path d="M1 5h4l1 1h3v7H1z" fill="#f0d040" stroke="#a08018" />
            <circle cx="9" cy="8.500" r="3.500" fill="#e4f0fc" stroke="#4868a8" strokeWidth="1.300" /><path d="M11.500 11l3.500 4" stroke="#8c5c30" strokeWidth="2" />
          </svg>
          Data
        </button>
        <button role="tab" aria-selected="false" className="flex h-5 items-end gap-0.5 px-0.5">
          <svg width="16" height="16" viewBox="0 0 16 16" className="mb-0.5">
            <path d="M1 3h11v12H1z" fill="#fff" stroke="#2c50a8" strokeWidth="1.300" /><path d="M3 7h7M3 9.500h7M3 12h7" stroke="#3868d0" strokeWidth="1.300" />
            <path d="M4 3l4-2h7v4l-4 1-3 1-1-2z" fill="#c89c78" stroke="#4c3420" strokeWidth=".8" /><path d="M13 0h3v5h-2z" fill="#445" />
          </svg>
          Display
        </button>
        <button role="tab" aria-selected="false" className="flex h-5 items-end gap-0.5 px-0.5">
          <svg width="16" height="16" viewBox="0 0 16 16" className="mb-0.5">
            <path d="M11 1L4 9l3 2 6-8z" fill="#6c8ce0" stroke="#24409c" /><path d="M2 14h11M8 11l4 1v2M12 5q3 4 0 8" stroke="#2c48a8" strokeWidth="1.600" fill="none" />
          </svg>
          Views
        </button>
      </div>
    </aside>
  );
}

/* ---------- model drawing ---------- */

const columns = [
  { x: 601.5, label: "A", c: "#8a8a8a" },
  { x: 699, label: "B", c: "#b4b4b4" },
  { x: 796.5, label: "C", c: "#000" },
  { x: 893.5, label: "D", c: "#8a8a8a" },
  { x: 991, label: "E", c: "#8a8a8a" },
];
const rows = [261.5, 339.5, 417.5, 495.5, 573.5, 651.5, 729];
const bays = [601.5, 648.5, 699, 747.5, 796.5, 845.5, 893.5, 944.5, 991];
const rowColor = (i: number) => (i < 2 ? "#000" : i < 4 ? "#808080" : "#a8a8a8");

function Tag({ x, y, w, label }: { x: number; y: number; w: number; label: string }) {
  return (
    <g>
      <rect x={x - w / 2} y={y - 7.5} width={w} height="15" rx="7.500" fill="#fff" stroke="#4c4c4c" />
      <text x={x + 0.5} y={y + 3.5} textAnchor="middle" fontSize="9" fill="#000" stroke="#000" strokeWidth=".2">{label}</text>
    </g>
  );
}

function ModelView() {
  return (
    <main className="min-w-0 flex-1 overflow-hidden border-l border-t-2 border-[#67696e] bg-white">
      <svg width="797" height="766" viewBox="401 110 797 766" className="max-w-none" fontFamily="Liberation Sans, sans-serif">
        <defs>
          <linearGradient id="ridge" gradientUnits="userSpaceOnUse" x1="601" x2="991" y1="0" y2="0">
            <stop offset=".35" stopColor="#3c3c9e" /><stop offset=".5" stopColor="#6464ff" /><stop offset=".65" stopColor="#3c3c9e" />
          </linearGradient>
          <linearGradient id="spine" gradientUnits="userSpaceOnUse" x1="0" x2="0" y1="261" y2="729">
            <stop offset=".38" stopColor="#3c3c9e" /><stop offset=".5" stopColor="#6464ff" /><stop offset=".62" stopColor="#3c3c9e" />
          </linearGradient>
        </defs>

        {/* grid axes */}
        <g strokeDasharray="1 3 8 4" shapeRendering="crispEdges">
          {columns.map((c) => (
            <path key={c.label} d={`M${c.x} 168V259M${c.x} 731V811`} stroke={c.c} strokeWidth={c.label === "B" ? 2 : 1} />
          ))}
          {rows.map((y, i) => (
            <path key={y} d={`M${i ? 521 : 522} ${y}H599M994 ${y}H1080`} stroke={rowColor(i)} />
          ))}
        </g>

        {/* bracing in the second and fifth field */}
        <g stroke="#b0b0ea" strokeDasharray="3 1">
          {[1, 4].map((r) =>
            bays.slice(0, -1).map((x, i) => (
              <path key={`${r}-${x}`} d={`M${x} ${rows[r]}L${bays[i + 1]} ${rows[r + 1]}M${bays[i + 1]} ${rows[r]}L${x} ${rows[r + 1]}`} />
            ))
          )}
        </g>

        {/* purlins */}
        {bays.map((x, i) => (
          <g key={x}>
            <rect x={x - 1} y="261" width="2.500" height="468" fill="#b4b4e0" />
            <rect x={x - 0.5} y="261" width="1.300" height="468" fill={i === 4 ? "url(#spine)" : i === 8 ? "#7c7cb4" : "#4040a4"} />
          </g>
        ))}
        <path d="M601.500 261V729" stroke="#14142c" strokeDasharray="8 4 1 3" />

        {/* frames */}
        {rows.map((y, i) => (
          <g key={y}>
            <rect x="601" y={y - 2} width="390" height="4" fill="#8c8cc8" />
            <rect x="601" y={y - 1.5} width="390" height="3" fill={i === 3 ? "url(#ridge)" : "#3c3c9e"} />
          </g>
        ))}
        <path d="M601 651.500h23M968 651.500h23" stroke="#3c3c9e" strokeWidth="4" />

        {/* supports */}
        {rows.map((y, i) =>
          columns
            .filter((c) => i === 0 || i === 6 || c.label === "A" || c.label === "E")
            .map((c) => (
              <g key={`${y}-${c.x}`}>
                <rect x={c.x - 3} y={y - 3} width="6" height="6" fill="#48d858" />
                <rect x={c.x - 2} y={y - 1.5} width="5" height="3" fill={c.label === "C" ? "#6c2458" : "#343c84"} />
              </g>
            ))
        )}

        {columns.map((c) => (
          <g key={c.label}>
            <Tag x={c.x + 0.5} y={155.5} w={25} label={c.label} />
            <Tag x={c.x + 0.5} y={825.5} w={25} label={c.label} />
          </g>
        ))}
        {rows.map((y, i) => (
          <g key={y}>
            <Tag x={i ? 507 : 508} y={y + 0.5} w={i ? 24 : 22} label={String(i + 1)} />
            <Tag x={i ? 1092 : 1091} y={y + 0.5} w={i ? 24 : 22} label={String(i + 1)} />
          </g>
        ))}

        {/* axis cross */}
        <path d="M456 760h33" stroke="#ff0000" strokeWidth="2" />
        <path d="M487 757.500l9 2.500-9 2.500z" fill="#c00000" />
        <path d="M456 760v32" stroke="#00ff00" strokeWidth="2" />
        <path d="M453 792l3 9 3-9z" fill="#00c000" />
        <path d="M454 757h5v6h-5z" fill="#0000ff" />
        <text x="506.500" y="764" textAnchor="middle" fontSize="9" fill="#ff0000">X</text>
        <text x="456.500" y="814" textAnchor="middle" fontSize="9" fill="#00e000">Y</text>
      </svg>
    </main>
  );
}

/* ---------- window ---------- */

const menus: [string, string, string][] = [
  ["", "F", "ile"],
  ["", "E", "dit"],
  ["", "V", "iew"],
  ["", "I", "nsert"],
  ["", "C", "alculate"],
  ["", "R", "esults"],
  ["", "T", "ools"],
  ["Ta", "b", "le"],
  ["", "O", "ptions"],
  ["", "A", "dd-on Modules"],
  ["", "W", "indow"],
  ["", "H", "elp"],
];

const modes = [
  { label: "SNAP", on: true, width: "w-[35px]" },
  { label: "GRID", on: false, width: "w-[35px]" },
  { label: "CARTES", on: true, width: "w-[50px]" },
  { label: "OSNAP", on: true, width: "w-[45px]" },
  { label: "GLINES", on: true, width: "w-[45px]" },
  { label: "DXF", on: true, width: "w-[29px]" },
];

export default function App() {
  return (
    <div className="flex h-screen flex-col overflow-hidden border-b border-l border-r-2 border-[#1883d7] bg-[#cfd3dc] font-[Roboto,sans-serif] text-xs text-black">
      <header className="flex h-[31px] shrink-0 items-center border-t border-[#1883d7] bg-[#0078d7] pl-2 text-white">
        <svg width="18" height="18" viewBox="0 0 18 18">
          <path d="M2 3h11M2 6.500h7M3.500 2v12M7 2v9" stroke="#78acd0" strokeWidth="1.800" />
          <path d="M1 14.500h5" stroke="#38a070" strokeWidth="2" />
          <text x="7" y="15" fontSize="14" fontWeight="bold" fill="#f8d040" stroke="#8c6c18" strokeWidth=".4" fontFamily="Liberation Sans, sans-serif">8</text>
        </svg>
        <h1 className="flex-1 pl-[3px] text-xs">RSTAB 8.25.01 x64 - [Test*]</h1>
        <button aria-label="Minimize" className="flex w-[46px] justify-center">
          <svg width="10" height="10" viewBox="0 0 10 10"><path d="M0 5.500h10" stroke="#fff" /></svg>
        </button>
        <button aria-label="Maximize" className="flex w-[46px] justify-center">
          <svg width="10" height="10" viewBox="0 0 10 10"><path d="M.5.500h9v9h-9z" fill="none" stroke="#fff" /></svg>
        </button>
        <button aria-label="Close" className="flex w-[46px] justify-center">
          <svg width="10" height="10" viewBox="0 0 10 10"><path d="M0 0l10 10M10 0L0 10" stroke="#fff" strokeWidth="1.200" /></svg>
        </button>
      </header>

      <nav className="flex h-6 shrink-0 items-center pl-px text-[#4b505c]">
        <svg width="9" height="18" viewBox="0 0 9 18">
          <path d="M4 3h2v2H4zM4 7h2v2H4zM4 11h2v2H4z" fill="#f4f6fa" />
          <path d="M4 3h1v1H4zM4 7h1v1H4zM4 11h1v1H4z" fill="#9096a4" />
        </svg>
        <svg width="16" height="14" viewBox="0 0 16 14" className="mr-0.5">
          <path d="M0 0h16v14H0z" fill="#1c2050" />
          <path d="M0 9.500h16M6.500 2v11M6.500 2L1 9M7 2l7 7M10.500 6v3" stroke="#fff" strokeWidth="1.200" fill="none" />
        </svg>
        {menus.map(([pre, key, post]) => (
          <button key={key} className="px-[7px] leading-4">
            {pre}<span className="underline underline-offset-2">{key}</span>{post}
          </button>
        ))}
        <div className="ml-auto flex gap-0.5 pr-0.5 pt-1.5">
          <button aria-label="Minimize document" className="flex w-3.5 justify-center">
            <svg width="9" height="9" viewBox="0 0 9 9"><path d="M1 7.500h7" stroke="#8b8680" strokeWidth="2" /></svg>
          </button>
          <button aria-label="Restore document" className="flex w-3.5 justify-center">
            <svg width="9" height="9" viewBox="0 0 9 9"><path d="M2.500 2.500V1H8.500V5.500H7M.5 3h6.500v5H.5z" fill="none" stroke="#8b8680" /></svg>
          </button>
          <button aria-label="Close document" className="flex w-3.5 justify-center">
            <svg width="9" height="9" viewBox="0 0 9 9"><path d="M1 1l7 7M8 1L1 8" stroke="#77726c" strokeWidth="2" /></svg>
          </button>
        </div>
      </nav>

      <div className="shrink-0 pb-px">
        <ToolbarRow row={1} clip />
        <ToolbarRow row={2} />
      </div>

      <div className="flex min-h-0 flex-1 gap-[5px]">
        <Navigator />
        <ModelView />
      </div>

      <footer className="flex h-[22px] shrink-0 items-center border-t border-[#9a9ea8] bg-linear-to-b from-[#e4e7ee] via-[#a9afb9] to-[#bfc3cb] text-[#20242c]">
        <div className="w-[436px]" />
        <div className="flex gap-0.5">
          {modes.map((m) => (
            <button
              key={m.label}
              aria-pressed={m.on}
              className={`h-[19px] border text-left leading-4 ${m.label === "CARTES" ? "pl-0.5" : "pl-px"} ${m.width} ${
                m.on ? "border-b-white border-l-black border-r-white border-t-black" : "border-b-[#8d929c] border-l-[#e6e8ee] border-r-[#8d929c] border-t-[#e6e8ee]"
              }`}
            >
              {m.label}
            </button>
          ))}
        </div>
        <div className="ml-auto flex h-4">
          <span className="w-[88px] border-l border-[#9297a0]" />
          <span className="w-[74px] border-l border-[#9297a0]" />
          <span className="w-[74px] border-l border-[#9297a0]" />
          <span className="flex w-[90px] items-end justify-end border-l border-[#9297a0]">
            <svg width="12" height="12" viewBox="0 0 12 12">
              <path d="M9 1h2v2H9zM5 5h2v2H5zM9 5h2v2H9zM1 9h2v2H1zM5 9h2v2H5zM9 9h2v2H9z" fill="#737882" />
            </svg>
          </span>
        </div>
      </footer>
    </div>
  );
}
